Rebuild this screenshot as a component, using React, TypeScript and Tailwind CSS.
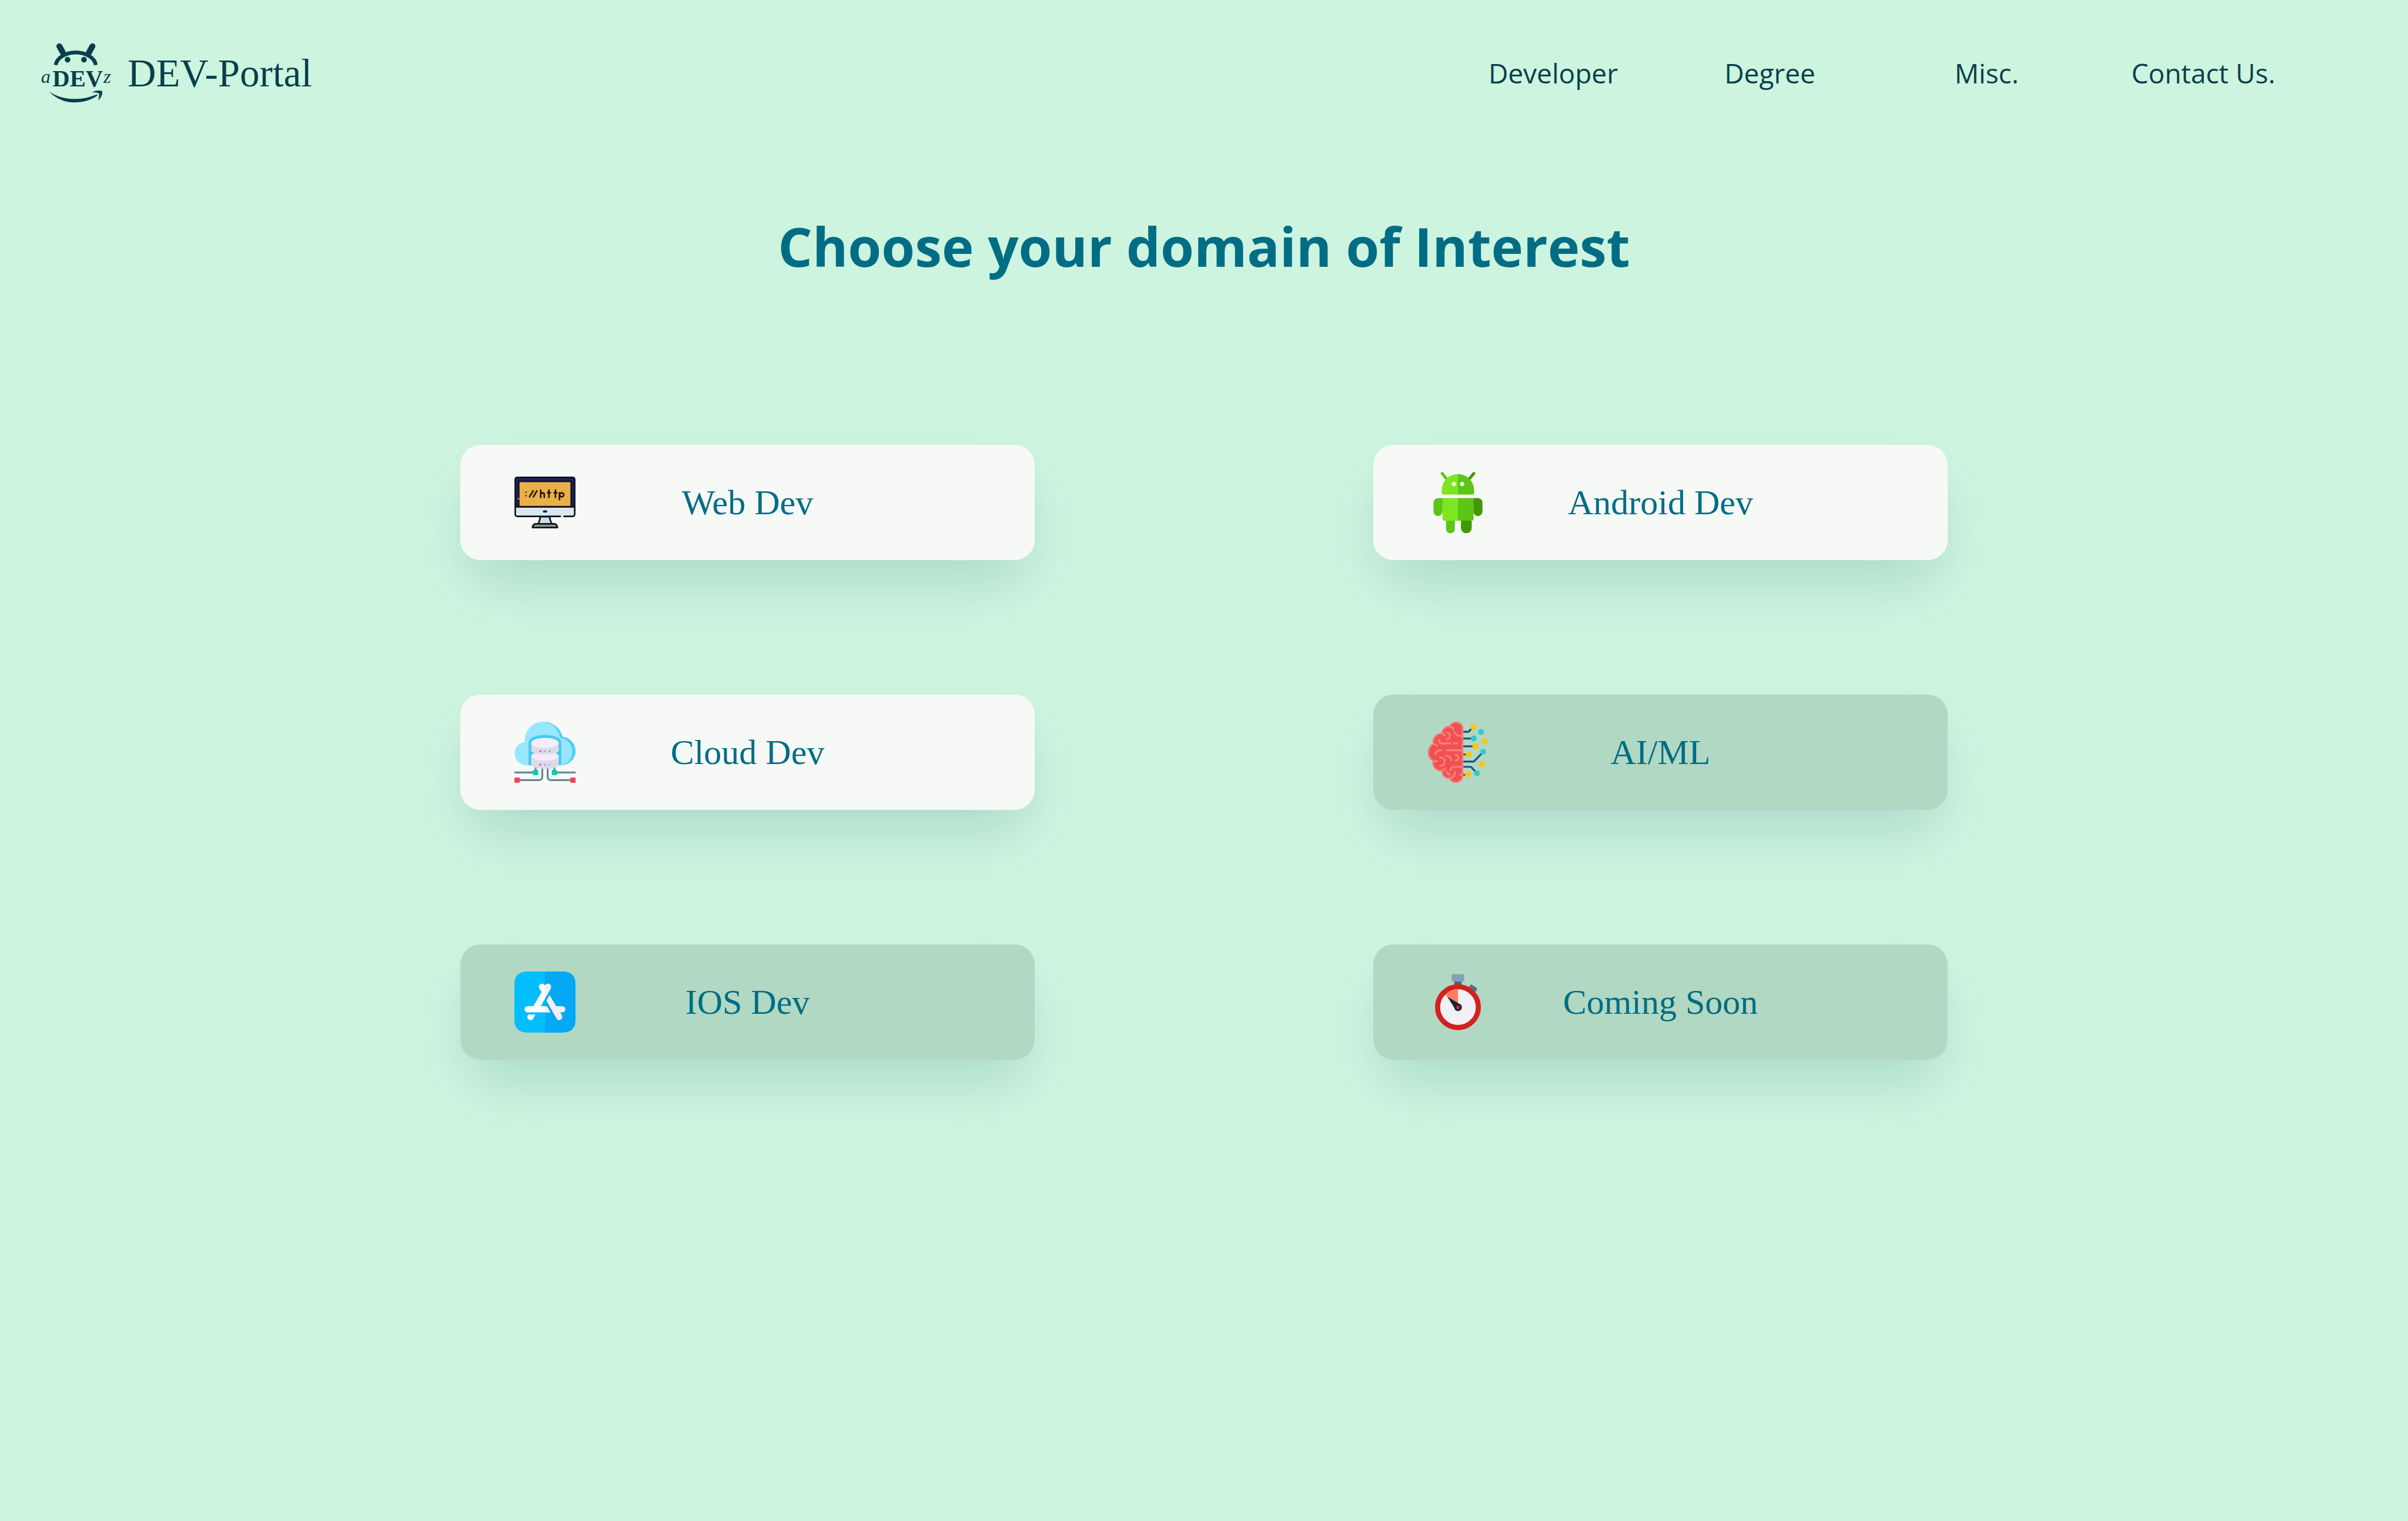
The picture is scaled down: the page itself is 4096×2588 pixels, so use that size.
import type { ReactNode } from "react";

const NAV_LINKS = ["Developer", "Degree", "Misc.", "Contact Us."];

function Logo() {
  return (
    <svg viewBox="50 55 500 435" className="h-[104px] w-[120px]" fill="#083f4b" aria-hidden="true">
      <g fill="none" stroke="#083f4b">
        <path d="M157 217A143 98 0 0 1 442 217" strokeWidth="27" />
        <path d="M183 83L207 127M418 83L394 127" strokeWidth="42" strokeLinecap="round" />
      </g>
      <circle cx="241" cy="179" r="20" />
      <circle cx="358" cy="179" r="20" />
      <text x="134" y="367" fontSize="170" fontWeight="700" fontFamily="Liberation Serif, serif">DEV</text>
      <text x="52" y="342" fontSize="136" fontStyle="italic" fontFamily="Liberation Serif, serif">a</text>
      <text x="497" y="342" fontSize="136" fontStyle="italic" fontFamily="Liberation Serif, serif">z</text>
      <path d="M109 404C165 444 230 458 290 458C350 458 400 446 445 427C452 425 458 431 450 437C405 468 350 483 290 483C220 483 160 456 109 404Z" />
      <path d="M415 412C435 399 465 395 487 401C492 425 480 450 460 468C463 450 468 435 465 419C450 411 433 410 415 412Z" />
    </svg>
  );
}

function WebIcon() {
  return (
    <svg viewBox="84 54 432 432" className="size-full" aria-hidden="true">
      <path d="M266 370H334Q335 400 350 422H250Q265 400 266 370Z" fill="#cbdcea" stroke="#0f1216" strokeWidth="11" />
      <path d="M232 421H368Q384 424 388 447H212Q216 424 232 421Z" fill="#8f9a9a" stroke="#0f1216" strokeWidth="12" strokeLinejoin="round" />
      <rect x="90" y="93" width="420" height="275" rx="16" fill="#d9e8ee" />
      <path d="M90 300V109Q90 93 106 93H494Q510 93 510 109V300Z" fill="#1b2169" />
      <rect x="115" y="121" width="370" height="178" fill="#e9b047" stroke="#140f12" strokeWidth="10" />
      <path d="M90 302H510" stroke="#140f12" strokeWidth="9" />
      <path d="M412 368H106Q90 368 90 352V109Q90 93 106 93H494Q510 93 510 109V352Q510 368 494 368H430" fill="none" stroke="#0f1216" strokeWidth="11" />
      <rect x="286" y="326" width="29" height="15" rx="5" fill="#11191c" />
      <path d="M108 238L122 244L108 250Z" fill="#e9b047" />
      <g fill="none" stroke="#24150a" strokeWidth="11" strokeLinecap="round" strokeLinejoin="round">
        <path d="M191 230L216 188M218 230L243 188" />
        <path d="M270 182V234M270 212Q273 202 284 202Q295 203 295 214V234" />
        <path d="M328 182V234M319 201H338M374 182V234M365 201H384" />
        <path d="M402 202V250" />
        <ellipse cx="418" cy="216" rx="15" ry="14" />
      </g>
      <circle cx="166" cy="197" r="6" fill="#6b3d12" />
      <circle cx="166" cy="222" r="6" fill="#6b3d12" />
    </svg>
  );
}

function AndroidIcon() {
  return (
    <svg viewBox="54 54 432 432" className="size-full" aria-hidden="true">
      <path d="M158 65L190 103" stroke="#5ac413" strokeWidth="20" strokeLinecap="round" />
      <path d="M382 65L350 103" stroke="#429800" strokeWidth="20" strokeLinecap="round" />
      <path d="M270 70C205 70 155 122 155 186V200Q155 214 169 214H270Z" fill="#7ee621" />
      <path d="M270 70C335 70 384 122 384 186V200Q384 214 370 214H270Z" fill="#5cc515" />
      <circle cx="241" cy="139" r="15" fill="#f2fbe8" />
      <circle cx="299" cy="139" r="15" fill="#e9fbe2" />
      <path d="M163 239H130Q97 241 97 275V334A32 32 0 0 0 161 334Z" fill="#5cc515" />
      <path d="M378 239H411Q443 241 443 275V334A32 32 0 0 1 379 334Z" fill="#429800" />
      <path d="M186 395H248V457A31 31 0 0 1 186 457Z" fill="#5cc515" />
      <path d="M291 395H367V450A38 38 0 0 1 291 450Z" fill="#429800" />
      <path d="M161 239H270V399H175Q161 399 161 385Z" fill="#7ee621" />
      <path d="M270 239H380V385Q380 399 366 399H270Z" fill="#5cc515" />
    </svg>
  );
}

function CloudIcon() {
  return (
    <svg viewBox="84 60 432 432" className="size-full" aria-hidden="true">
      <path d="M168 368A83 83 0 0 1 156 203C154 120 215 60 287 60C352 60 410 105 424 167C475 170 516 215 516 267C516 322 471 367 416 367Z" fill="#99e6ff" />
      <path d="M287 60C352 60 410 105 424 167C475 170 516 215 516 267C516 322 471 367 416 367Q493 348 493 266Q488 190 407 174Q390 76 287 60Z" fill="#4fd0fa" />
      <path d="M184 367V207Q190 158 300 155Q410 158 415 207V367Z" fill="#45c8f2" />
      <path d="M203 301V365Q208 391 300 393Q391 391 397 365V301Z" fill="#dddbe8" />
      <ellipse cx="300" cy="303" rx="97" ry="32" fill="#f3ebf8" />
      <path d="M203 210V264Q208 290 300 292Q391 290 397 264V210Z" fill="#dddbe8" />
      <ellipse cx="300" cy="210" rx="97" ry="36" fill="#f6edfa" />
      <g>
        <circle cx="267" cy="269" r="7" fill="#ee5277" />
        <circle cx="300" cy="269" r="7" fill="#a6a7b5" />
        <circle cx="333" cy="269" r="7" fill="#34cfaa" />
        <circle cx="267" cy="363" r="7" fill="#ee5277" />
        <circle cx="300" cy="365" r="7" fill="#a6a7b5" />
        <circle cx="333" cy="363" r="7" fill="#75d5c4" />
      </g>
      <g fill="none" stroke="#688897" strokeWidth="13">
        <path d="M84 419H220M380 419H516M234 385V405M367 385V405" />
        <path d="M120 473H256Q281 473 281 448V391M480 473H344Q319 473 319 448V391" />
      </g>
      <g fill="#06cbb5">
        <rect x="215" y="401" width="37" height="37" rx="4" />
        <rect x="348" y="401" width="37" height="37" rx="4" />
      </g>
      <g fill="#ff4155">
        <rect x="84" y="455" width="38" height="37" rx="4" />
        <rect x="479" y="455" width="37" height="37" rx="4" />
      </g>
    </svg>
  );
}

function BrainIcon() {
  return (
    <svg viewBox="54 60 432 432" className="size-full" aria-hidden="true">
      <path
        d="M302 105C299 54 225 54 212 94C184 92 160 113 159 143C120 143 88 175 98 218C55 232 48 310 94 334C90 380 118 407 158 406C160 440 180 460 212 459C226 500 302 498 302 438Z"
        fill="#f15054"
        stroke="#fb766f"
        strokeWidth="11"
        strokeLinejoin="round"
      />
      <g fill="none" stroke="#fb8078" strokeWidth="13" strokeLinecap="round">
        <path d="M214 95Q238 97 238 118M247 137Q257 160 299 160" />
        <path d="M190 135Q215 139 212 163Q207 184 190 184M160 145L178 157" />
        <path d="M135 188Q138 214 160 214H215M242 213H266M99 218Q115 220 121 231" />
        <path d="M110 291Q113 261 153 261M192 262H300" />
        <path d="M184 300Q221 301 221 335M252 295Q273 295 273 315Q272 335 252 335" />
        <path d="M100 340H122M144 311Q176 316 176 342Q174 371 145 372" />
        <path d="M216 405Q218 379 250 379H299M249 414Q248 456 213 459M158 404Q178 402 180 390M192 415Q197 431 213 434M284 436H300" />
      </g>
      <g fill="none" stroke="#13538a" strokeWidth="13" strokeLinejoin="round">
        <path d="M308 131H345L373 101M308 179H372M308 234H384M308 342H382L440 282M308 379H362L402 422" />
        <path d="M308 292H335M308 435H335" stroke="#60513b" />
      </g>
      <g fill="#ffc60a">
        <circle cx="377" cy="98" r="21" />
        <circle cx="460" cy="199" r="21" />
        <circle cx="393" cy="234" r="21" />
        <circle cx="346" cy="292" r="21" />
        <circle cx="439" cy="360" r="21" />
        <circle cx="342" cy="435" r="21" />
      </g>
      <g fill="#33c9cf">
        <circle cx="433" cy="132" r="21" />
        <circle cx="382" cy="178" r="21" />
        <circle cx="447" cy="273" r="21" />
        <circle cx="404" cy="424" r="21" />
      </g>
    </svg>
  );
}

function AppStoreIcon() {
  return (
    <svg viewBox="84 66 432 432" className="size-full" aria-hidden="true">
      <path d="M300 66H176Q84 66 84 158V406Q84 498 176 498H300Z" fill="#02beff" />
      <path d="M300 66H424Q516 66 516 158V406Q516 498 424 498H300Z" fill="#04a8f3" />
      <path d="M260 187C246 160 282 136 300 165C318 136 354 160 340 187L270 311H314L337 355H177C149 355 149 311 177 311H218L277 210Z" fill="#ffffff" />
      <path d="M300 165C318 136 354 160 340 187L300 258ZM300 311H314L337 355H300Z" fill="#f2eff9" />
      <path d="M333 233L379 311H423C451 311 451 355 423 355H408L419 377C433 402 397 424 382 399L310 272Z" fill="#f2eff9" />
      <path d="M185 370H233L216 399C201 424 164 402 178 377Z" fill="#ffffff" />
    </svg>
  );
}

function StopwatchIcon() {
  return (
    <svg viewBox="54 66 432 432" className="size-full" aria-hidden="true">
      <rect x="244" y="130" width="52" height="32" fill="#49677b" />
      <rect x="226" y="85" width="88" height="53" rx="5" fill="#8b9eb8" />
      <path d="M362 155L405 184L398 209L372 205L345 182Z" fill="#547284" />
      <circle cx="270" cy="318" r="144" fill="#f1f0f4" stroke="#d3211f" strokeWidth="36" />
      <path d="M270 318V190Q222 190 179 230Z" fill="#ff7f5f" />
      <path d="M195 245L278 293A27 27 0 1 1 244 322Z" fill="#17272d" />
      <circle cx="270" cy="319" r="12" fill="#cf2a35" />
    </svg>
  );
}

type Domain = { label: string; icon: ReactNode; available: boolean };

const DOMAINS: Domain[] = [
  { label: "Web Dev", icon: <WebIcon />, available: true },
  { label: "Android Dev", icon: <AndroidIcon />, available: true },
  { label: "Cloud Dev", icon: <CloudIcon />, available: true },
  { label: "AI/ML", icon: <BrainIcon />, available: false },
  { label: "IOS Dev", icon: <AppStoreIcon />, available: false },
  { label: "Coming Soon", icon: <StopwatchIcon />, available: false },
];

function DomainCard({ label, icon, available }: Domain) {
  return (
    <button
      type="button"
      className={`grid h-[196px] grid-cols-[104px_1fr_104px] items-center rounded-[34px] px-[92px] shadow-[0_50px_100px_-20px_rgba(0,90,100,0.18)] ${
        available ? "bg-[#f7f9f7]" : "bg-[#b1d8c3]"
      }`}
    >
      <span className="size-[104px]">{icon}</span>
      <span className="text-center font-['Liberation_Serif',serif] text-[60px] leading-[72px] text-[#006d85]">{label}</span>
    </button>
  );
}

export default function App() {
  return (
    <div className="min-h-screen bg-[#cdf4df]">
      <header className="flex h-[248px] items-center justify-between pr-[4%] pl-[69px]">
        <a href="#home" className="flex items-center gap-[28px]">
          <Logo />
          <span className="font-['Liberation_Serif',serif] text-[67px] leading-[72px] text-[#083f4b]">DEV-Portal</span>
        </a>
        <nav className="grid w-[36vw] grid-cols-4 font-['Open_Sans',sans-serif] text-[46px] leading-[72px] text-[#083f4b]">
          {NAV_LINKS.map((link) => (
            <a key={link} href="#top" className="text-center whitespace-nowrap">
              {link}
            </a>
          ))}
        </nav>
      </header>
      <main>
        <h1 className="mt-[99px] text-center font-['Open_Sans',sans-serif] text-[92px] leading-[144px] font-bold text-[#006d85]">
          Choose your domain of Interest
        </h1>
        <section className="mt-[266px] grid grid-cols-2 gap-x-[576px] gap-y-[229px] px-[783px]">
          {DOMAINS.map((domain) => (
            <DomainCard key={domain.label} {...domain} />
          ))}
        </section>
      </main>
    </div>
  );
}
